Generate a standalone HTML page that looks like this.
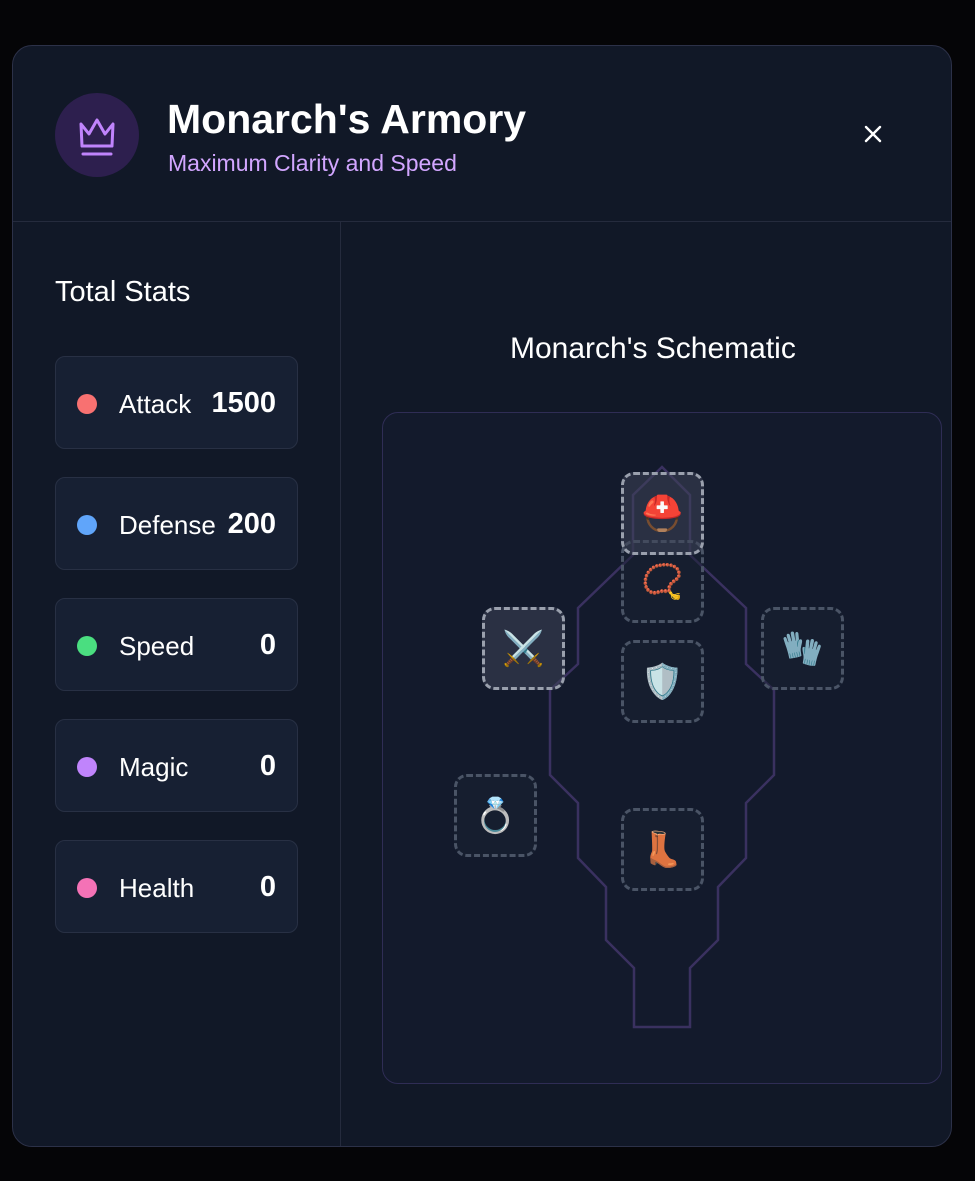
<!DOCTYPE html>
<html><head><meta charset="utf-8"><style>
*{box-sizing:border-box;margin:0;padding:0}
body{width:975px;height:1181px;background:#050507;font-family:"Liberation Sans","DejaVu Sans",sans-serif;position:relative;overflow:hidden}
.modal{position:absolute;left:12px;top:45px;width:940px;height:1102px;background:#111827;border:1px solid #2c3148;border-radius:20px;overflow:hidden}
.hdr{position:absolute;left:0;top:0;width:100%;height:176px;border-bottom:1px solid #252b3d}
.av{position:absolute;left:42px;top:47px;width:84px;height:84px;border-radius:50%;background:#2d1f4e}
.t1{position:absolute;left:154px;top:50px;color:#fff;font-size:41px;font-weight:bold}
.t2{position:absolute;left:155px;top:104px;color:#d2a6ff;font-size:23px}
.x{position:absolute;left:846px;top:74px}
.left{position:absolute;left:0;top:176px;width:328px;bottom:0;border-right:1px solid #252b3d}
.ts{position:absolute;left:42px;top:54px;color:#fff;font-size:29px}
.card{position:absolute;left:42px;width:243px;height:93px;background:#172033;border:1px solid #283044;border-radius:10px}
.dot{position:absolute;left:21px;top:37px;width:20px;height:20px;border-radius:50%}
.lab{position:absolute;left:63px;top:32px;color:#fff;font-size:26px}
.val{position:absolute;right:21px;top:30px;color:#fff;font-size:29px;font-weight:bold}
.sch{position:absolute;left:497px;top:286px;color:#fff;font-size:30px}
.box{position:absolute;left:382px;top:412px;width:560px;height:672px;border:1px solid #2f2d55;border-radius:16px;background:#131a2c}
.slot{position:absolute;width:83px;height:83px;border:3px dashed #4a5466;border-radius:13px;display:flex;align-items:center;justify-content:center;font-size:34px;font-family:"Noto Color Emoji","DejaVu Sans",sans-serif;background:rgba(25,33,50,.5)}
.f{background:rgba(62,68,88,.55);border-color:#9aa0ad}
</style></head><body>
<div class="modal">
<div class="hdr">
<div class="av"><svg width="84" height="84" viewBox="0 0 84 84"><path d="M26 31 L34 41 L42 27 L50 41 L58 31 L57 53 L27 53 Z" fill="none" stroke="#c084fc" stroke-width="3" stroke-linejoin="round"/><path d="M28 61 H56" stroke="#c084fc" stroke-width="3" stroke-linecap="round"/></svg></div>
<div class="t1">Monarch's Armory</div>
<div class="t2">Maximum Clarity and Speed</div>
<div class="x"><svg width="28" height="28" viewBox="0 0 28 28"><path d="M7 7 L21 21 M21 7 L7 21" stroke="#fff" stroke-width="2.4" stroke-linecap="round"/></svg></div>
</div>
<div class="left">
<div class="ts">Total Stats</div>
<div class="card" style="top:134px"><div class="dot" style="background:#f87171"></div><div class="lab">Attack</div><div class="val">1500</div></div>
<div class="card" style="top:255px"><div class="dot" style="background:#60a5fa"></div><div class="lab">Defense</div><div class="val">200</div></div>
<div class="card" style="top:376px"><div class="dot" style="background:#4ade80"></div><div class="lab">Speed</div><div class="val">0</div></div>
<div class="card" style="top:497px"><div class="dot" style="background:#c084fc"></div><div class="lab">Magic</div><div class="val">0</div></div>
<div class="card" style="top:618px"><div class="dot" style="background:#f472b6"></div><div class="lab">Health</div><div class="val">0</div></div>
</div>
<div class="sch">Monarch's Schematic</div>
</div>
<div class="box"></div>
<svg style="position:absolute;left:0;top:0" width="975" height="1181"><path d="M662 467 L690 495 L690 555 L746 608 L746 664 L774 690 L774 775 L746 803 L746 858 L718 887 L718 940 L690 968 L690 1027 L634 1027 L634 968 L606 940 L606 887 L578 858 L578 803 L550 775 L550 690 L578 664 L578 608 L633 555 L633 495 Z" fill="none" stroke="#3a3160" stroke-width="2.5"/></svg>
<div class="slot" style="left:621px;top:540px">📿</div>
<div class="slot f" style="left:621px;top:472px">⛑️</div>
<div class="slot f" style="left:482px;top:607px">⚔️</div>
<div class="slot" style="left:761px;top:607px">🧤</div>
<div class="slot" style="left:621px;top:640px">🛡️</div>
<div class="slot" style="left:454px;top:774px">💍</div>
<div class="slot" style="left:621px;top:808px">👢</div>
</body></html>
